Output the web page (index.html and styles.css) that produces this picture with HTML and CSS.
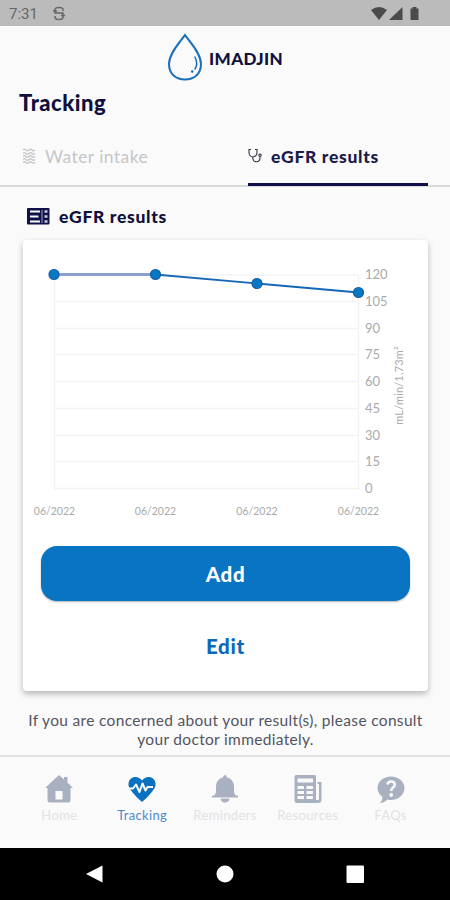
FILE: index.html
```html
<!DOCTYPE html>
<html lang="en">
<head>
    <meta charset="UTF-8">
    <meta name="viewport" content="width=device-width, initial-scale=1.0">
    <title>IMADJIN - Tracking</title>
    <link rel="stylesheet" href="styles.css">
</head>
<body>

<div class="status-bar">
    <span class="time">7:31</span>
    <svg class="status-app" width="12" height="15" viewBox="0 0 12 15" fill="none" stroke="#666" stroke-width="1.5">
        <path d="M10 5V3.500Q10 1.500 6 1.500T2 3.500V7H10V11Q10 13.500 6 13.500T2 11V10M0 5H4M8 9.500H12"/>
    </svg>
    <svg class="status-icons" width="50" height="16" viewBox="0 0 50 16" fill="#4b4b4b">
        <path d="M0 4Q8-2 16 4L8 14Z"/>
        <path d="M31.500 1V14H18Z"/>
        <path d="M39.500 2.500H41.500V1H45.500V2.500H47.500V14H39.500Z"/>
    </svg>
</div>

<header class="header">
    <svg width="36" height="48" viewBox="0 0 36 48" fill="none" stroke="#1b6fb8" stroke-width="2" stroke-linecap="round">
        <path d="M18 2C14 8 2 20 2 31C2 41 9 46.500 18 46.500S34 41 34 31C34 20 22 8 18 2Z"/>
        <path d="M28 24Q31.500 31 28 36" stroke-width="1.500"/>
        <path d="M25.200 38.500h.1" stroke-width="2.500"/>
    </svg>
    <span class="brand">IMADJIN</span>
</header>

<h1 class="title">Tracking</h1>

<div class="tabs">
    <div class="tab">
        <svg width="14" height="16" viewBox="0 0 14 16" fill="none" stroke="#c6c6c8" stroke-width="1.200">
            <path d="M1 2q1.500-1.500 3 0t3 0 3 0 3 0M1 5.500q1.500-1.500 3 0t3 0 3 0 3 0M1 8.500q1.500-1.500 3 0t3 0 3 0 3 0M1 11.500q1.500-1.500 3 0t3 0 3 0 3 0M1 14.500q1.500-1.500 3 0t3 0 3 0 3 0"/>
        </svg>
        <span class="tab-water">Water intake</span>
    </div>
    <div class="tab active">
        <svg width="14" height="16" viewBox="0 0 14 16" fill="none" stroke="#34344c" stroke-width="1.100">
            <path d="M3 1.500H1V5Q1.500 8.500 4.800 9Q8.500 8.500 9 5V1.500H7M4.800 9V10.500Q5.500 14 8.500 13.800Q12 13.500 12 10V8.500"/>
            <circle cx="12" cy="7.300" r="1.200"/>
        </svg>
        <span class="tab-egfr">eGFR results</span>
    </div>
</div>

<main>
    <h2 class="section">
        <svg width="23" height="17" viewBox="0 0 23 17">
            <rect width="22.500" height="16.500" rx="1" fill="#10104a"/>
            <path d="M3 3.500H13M3 8.500H11.500M3 13.500H13" stroke="#fafafa" stroke-width="2"/>
            <path d="M15 2V15" stroke="#a5a5bd" stroke-width="1"/>
            <path d="M17.500 3.500H20.500M17.500 8.500H20.500M17.500 13.500H20.500" stroke="#c8c8d8" stroke-width="2.500"/>
        </svg>
        <span>eGFR results</span>
    </h2>

    <div class="card">
        <svg class="chart" width="405" height="290" viewBox="0 0 405 290">
            <path class="grid" d="M31 35H336M31 61.500H336M31 88.500H336M31 114.500H336M31 141.500H336M31 168.500H336M31 195.500H336M31 221.500H336M31 248.500H336M31.500 35V249M335.500 35V249"/>
            <path d="M31 34.500H132" stroke="#8d9fd0" stroke-width="3"/>
            <path d="M132 34.500L234 43.500L335.500 52.500" fill="none" stroke="#1767b8" stroke-width="1.800"/>
            <g fill="#0878c5" stroke="#155fa8" stroke-width="1.200">
                <circle cx="31" cy="34.500" r="5"/>
                <circle cx="132.500" cy="34.500" r="5"/>
                <circle cx="234" cy="43.500" r="5"/>
                <circle cx="335.500" cy="52.500" r="5"/>
            </g>
            <g class="y-labels">
                <text x="342" y="39">120</text>
                <text x="342" y="66">105</text>
                <text x="342" y="92.500">90</text>
                <text x="342" y="119">75</text>
                <text x="342" y="146">60</text>
                <text x="342" y="172.500">45</text>
                <text x="342" y="199.500">30</text>
                <text x="342" y="226">15</text>
                <text x="342" y="253">0</text>
            </g>
            <g class="x-labels">
                <text x="31.500" y="275">06/2022</text>
                <text x="132.500" y="275">06/2022</text>
                <text x="234" y="275">06/2022</text>
                <text x="335.500" y="275">06/2022</text>
            </g>
            <text class="unit" transform="translate(379.500 145.500) rotate(-90)">mL/min/1.73m²</text>
        </svg>
        <button class="btn-add">Add</button>
        <button class="btn-edit">Edit</button>
    </div>

    <p class="note">If you are concerned about your result(s), please consult<br>your doctor immediately.</p>
</main>

<nav class="tab-bar">
    <a class="nav-item">
        <svg width="28" height="28" viewBox="0 0 28 28" fill="#a9b1c1">
            <path fill-rule="evenodd" d="M14 0L19 4.500V2H22.500V7.500L28 13H25.500V25.500Q25.500 27.500 23.500 27.500H4.500Q2.500 27.500 2.500 25.500V13H0ZM10.500 16V24.500H17.500V16Z"/>
        </svg>
        <span>Home</span>
    </a>
    <a class="nav-item active">
        <svg width="28" height="28" viewBox="0 0 28 28">
            <path d="M14 27Q10 24 5 18Q0 12.500 .5 8.500Q1 3 6.500 2Q11 1.500 14 5.500Q17 1.500 21.500 2Q27 3 27.500 8.500Q28 12.500 23 18Q18 24 14 27Z" fill="#0872c1"/>
            <path d="M1 13.500H5L8 9.500L11.500 17L14.500 8.500L17.500 15.500L19.500 12H25" fill="none" stroke="#fafafa" stroke-width="2" stroke-linejoin="round"/>
        </svg>
        <span>Tracking</span>
    </a>
    <a class="nav-item">
        <svg width="28" height="28" viewBox="0 0 28 28" fill="#a9b1c1">
            <path d="M12 2.500Q12 0 14 0T16 2.500Q22.500 4 23 11V17L24.500 20.500H27V22.500H1V20.500H3.500L5 17V11Q5.500 4 12 2.500ZM9.500 23.500H18.500Q18 27.500 14 27.500T9.500 23.500Z"/>
        </svg>
        <span>Reminders</span>
    </a>
    <a class="nav-item">
        <svg width="28" height="28" viewBox="0 0 28 28" fill="#a9b1c1">
            <path fill-rule="evenodd" d="M2 0H20.500Q22 0 22 1.500V24Q22 28 25 28H3Q.5 28 .5 25V1.500Q.5 0 2 0ZM3.500 3.500V7.500H19V3.500ZM3.500 11V14H10V11ZM12.500 11V14H19V11ZM3.500 16V19H10V16ZM12.500 16V19H19V16ZM3.500 21V24H10V21ZM12.500 21V24H19V21Z"/>
            <path d="M23.500 7H27.500V24.500Q27.500 28 24 28H20V25H24Q25 25 25 23.500V9H23.500Z"/>
        </svg>
        <span>Resources</span>
    </a>
    <a class="nav-item">
        <svg width="28" height="28" viewBox="0 0 28 28">
            <path d="M14 1.500C21.500 1.500 27.500 6.500 27.500 13S21.500 25 14 25Q12 25 10.500 24.500Q6.500 28 3 28Q5.500 25.500 5.500 22Q.5 18 .5 13C.5 6.500 6.500 1.500 14 1.500Z" fill="#a9b1c1"/>
            <path d="M10.500 9.500Q11 6.500 14 6.500Q17.800 6.500 17.800 9.500Q17.800 11.500 15.500 13Q14.200 14 14.200 16" fill="none" stroke="#fafafa" stroke-width="2.600"/>
            <circle cx="14.200" cy="20" r="1.900" fill="#fafafa"/>
        </svg>
        <span>FAQs</span>
    </a>
</nav>

<div class="system-nav">
    <svg width="450" height="52" viewBox="0 0 450 52" fill="#fff">
        <path d="M86 26L102.500 17.500V34.500Z"/>
        <circle cx="225" cy="26" r="8.500"/>
        <rect x="346.500" y="17.500" width="17.500" height="17.500" rx="1"/>
    </svg>
</div>

</body>
</html>
```
FILE: styles.css
```css
* {
    box-sizing: border-box;
}
body {
    margin: 0;
    width: 450px;
    height: 900px;
    overflow: hidden;
    display: flex;
    flex-direction: column;
    background-color: #fafafa;
    color: #10103c;
    font-family: Lato, sans-serif;
}
.status-bar {
    height: 26px;
    flex: none;
    display: flex;
    align-items: center;
    padding: 1px 29px 0 9px;
    background-color: #bbb;
}
.time {
    width: 44px;
    font-family: Roboto, sans-serif;
    font-size: 15px;
    color: #666;
}
.status-icons {
    margin-left: auto;
}
.header {
    height: 64px;
    flex: none;
    display: flex;
    align-items: center;
    padding: 0 0 2px 167px;
}
.brand {
    margin-left: 6px;
    padding-top: 3px;
    font-size: 17px;
    font-weight: 900;
    line-height: 20px;
    letter-spacing: 0.4px;
}
.title {
    margin: 0;
    padding: 1px 0 0 19px;
    height: 38px;
    flex: none;
    font-size: 22px;
    font-weight: 900;
    line-height: 24px;
    letter-spacing: 0.5px;
}
.tabs {
    height: 59px;
    flex: none;
    display: flex;
    justify-content: space-between;
    padding: 0 22px;
    border-bottom: 2px solid #dadadc;
}
.tab {
    width: 180px;
    height: 58px;
    display: flex;
    align-items: center;
    padding-top: 1px;
    gap: 9px;
    font-size: 17.5px;
    color: #c6c6c8;
    border-bottom: 3px solid transparent;
}
.tab-water {
    letter-spacing: 0.42px;
}
.tab.active {
    color: #1c1c4c;
    font-weight: 900;
    letter-spacing: 0.68px;
    border-bottom-color: #10104a;
}
main {
    flex: none;
    height: 568px;
    padding: 0 22px 0 23px;
}
.section {
    margin: 0;
    height: 53px;
    display: flex;
    align-items: center;
    gap: 9px;
    padding: 5px 0 0 4px;
    font-size: 17.5px;
    font-weight: 900;
    letter-spacing: 0.68px;
}
.card {
    height: 451px;
    display: flex;
    flex-direction: column;
    background-color: #fff;
    border-radius: 4px;
    box-shadow: 0 3px 6px rgba(0, 0, 0, 0.27);
}
.grid {
    fill: none;
    stroke: #f3f3f4;
    stroke-width: 1.5;
}
.y-labels {
    font-size: 13px;
    fill: #aaa;
}
.x-labels {
    font-size: 10.5px;
    fill: #aaa;
    text-anchor: middle;
}
.unit {
    font-size: 11px;
    letter-spacing: 0.15px;
    fill: #aaa;
    text-anchor: middle;
}
.btn-add,
.btn-edit {
    border: none;
    font-family: inherit;
    font-size: 20.5px;
    font-weight: 900;
    letter-spacing: 0.7px;
}
.btn-add {
    height: 55px;
    margin: 16px 18px 0;
    border-radius: 16px;
    background-color: #0874c2;
    color: #fff;
    box-shadow: 0 1px 2px rgba(0, 0, 0, 0.3);
}
.btn-edit {
    height: 50px;
    margin: 20px 18px 0;
    background: none;
    color: #0c69b8;
}
.note {
    margin: 20px -10px 0;
    font-size: 15.5px;
    line-height: 19px;
    letter-spacing: 0.32px;
    text-align: center;
    color: #545461;
}
.tab-bar {
    height: 93px;
    flex: none;
    display: flex;
    padding: 18px 18px 0;
    border-top: 2px solid #e2e2e3;
}
.nav-item {
    flex: 1;
    display: flex;
    flex-direction: column;
    align-items: center;
    gap: 3px;
    font-size: 13px;
    line-height: 18px;
    letter-spacing: 0.35px;
    color: #e2e2e5;
}
.nav-item.active {
    color: #4d8acb;
}
.system-nav {
    height: 52px;
    flex: none;
    background-color: #000;
}
```
